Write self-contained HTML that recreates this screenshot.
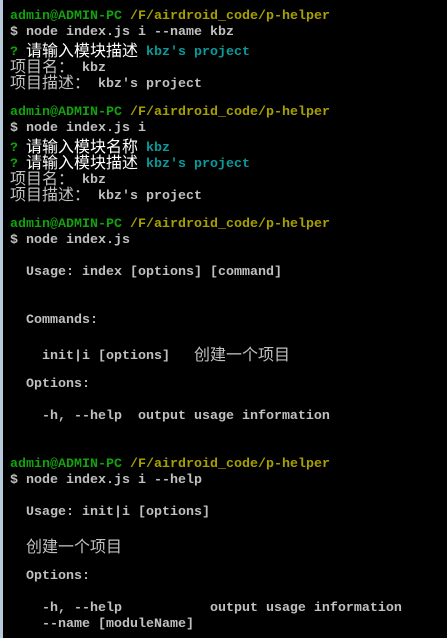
<!DOCTYPE html>
<html><head><meta charset="utf-8"><style>
html,body{margin:0;padding:0;background:#000;width:447px;height:638px;overflow:hidden}
#b{position:absolute;left:0;top:0;width:3px;height:638px;background:#b9c9dc}
#t{position:absolute;left:10px;top:8px;font-family:"Liberation Mono",monospace;font-size:13.33px;color:#c0c0c0;font-weight:bold}
#t div{height:16px;line-height:17px;white-space:pre;overflow:visible}
.c{font-family:"Noto Sans CJK SC","WenQuanYi Zen Hei",sans-serif;font-weight:normal;font-size:16px;line-height:16px;position:relative;top:1px}
.w{color:#fff}
.g{color:#13a10e}
.y{color:#a8a000}
.t{color:#0a9a9a}
</style></head><body><div id="b"></div><div id="t">
<div><span class="g">admin@ADMIN-PC</span> <span class="y">/F/airdroid_code/p-helper</span></div>
<div>$ node index.js i --name kbz</div>
<div><span class="g">?</span> <span class="c w">请输入模块描述</span> <span class="t">kbz's project</span></div>
<div><span class="c">项目名：</span> kbz</div>
<div><span class="c">项目描述：</span> kbz's project</div>
<div> </div>
<div><span class="g">admin@ADMIN-PC</span> <span class="y">/F/airdroid_code/p-helper</span></div>
<div>$ node index.js i</div>
<div><span class="g">?</span> <span class="c w">请输入模块名称</span> <span class="t">kbz</span></div>
<div><span class="g">?</span> <span class="c w">请输入模块描述</span> <span class="t">kbz's project</span></div>
<div><span class="c">项目名：</span> kbz</div>
<div><span class="c">项目描述：</span> kbz's project</div>
<div> </div>
<div><span class="g">admin@ADMIN-PC</span> <span class="y">/F/airdroid_code/p-helper</span></div>
<div>$ node index.js</div>
<div> </div>
<div>  Usage: index [options] [command]</div>
<div> </div>
<div> </div>
<div>  Commands:</div>
<div> </div>
<div>    init|i [options]   <span class="c">创建一个项目</span></div>
<div> </div>
<div>  Options:</div>
<div> </div>
<div>    -h, --help  output usage information</div>
<div> </div>
<div> </div>
<div><span class="g">admin@ADMIN-PC</span> <span class="y">/F/airdroid_code/p-helper</span></div>
<div>$ node index.js i --help</div>
<div> </div>
<div>  Usage: init|i [options]</div>
<div> </div>
<div>  <span class="c">创建一个项目</span></div>
<div> </div>
<div>  Options:</div>
<div> </div>
<div>    -h, --help           output usage information</div>
<div>    --name [moduleName]</div>
</div></body></html>
